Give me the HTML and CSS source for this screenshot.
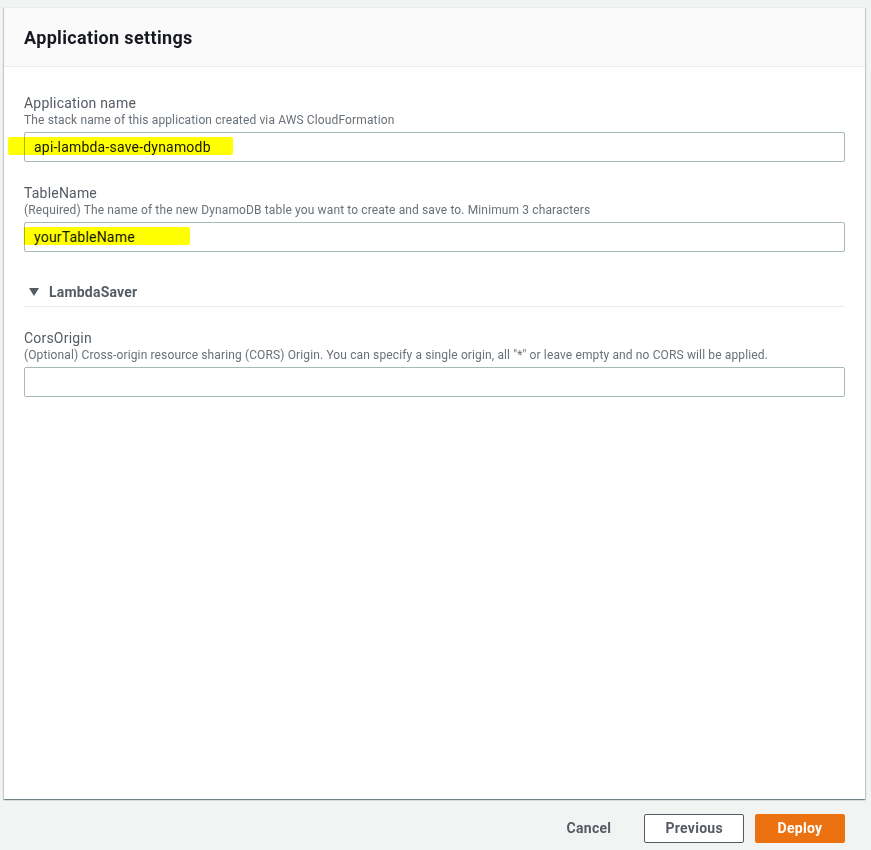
FILE: index.html
```html
<!DOCTYPE html>
<html lang="en">
<head>
<meta charset="utf-8">
<title>Application settings</title>
<link rel="stylesheet" href="styles.css">
</head>
<body>
<div class="page">
  <div class="card">
    <div class="card-header">
      <h2 class="card-title">Application settings</h2>
    </div>
    <div class="card-body">
      <div class="field">
        <div class="field-label">Application name</div>
        <div class="field-desc">The stack name of this application created via AWS CloudFormation</div>
        <div class="input-wrap">
          <div class="input">api-lambda-save-dynamodb</div>
          <span class="marker marker-one"></span>
        </div>
      </div>
      <div class="field">
        <div class="field-label">TableName</div>
        <div class="field-desc">(Required) The name of the new DynamoDB table you want to create and save to. Minimum 3 characters</div>
        <div class="input-wrap">
          <div class="input">yourTableName</div>
          <span class="marker marker-two"></span>
        </div>
      </div>
      <div class="section-head">
        <svg class="caret" width="10" height="8" viewBox="0 0 10 8"><polygon points="0,0 10,0 5,8" fill="#545b64"/></svg>
        <span class="section-title">LambdaSaver</span>
      </div>
      <div class="field">
        <div class="field-label">CorsOrigin</div>
        <div class="field-desc">(Optional) Cross-origin resource sharing (CORS) Origin. You can specify a single origin, all "*" or leave empty and no CORS will be applied.</div>
        <div class="input-wrap">
          <div class="input"></div>
        </div>
      </div>
    </div>
  </div>
  <div class="actions">
    <button class="btn btn-link">Cancel</button>
    <button class="btn btn-normal">Previous</button>
    <button class="btn btn-primary">Deploy</button>
  </div>
</div>
</body>
</html>
```

FILE: styles.css
```css
html, body {
  margin: 0;
  padding: 0;
  background: #f2f3f3;
  font-family: Roboto, "Liberation Sans", Arial, sans-serif;
  color: #16191f;
}

.page {
  padding: 7px 6px 0 4px;
  display: flex;
  flex-direction: column;
}

.card {
  background: #ffffff;
  height: 792px;
  box-shadow: 0 1px 1px 0 rgba(0, 28, 36, 0.35), 1px 1px 1px 0 rgba(0, 28, 36, 0.15), -1px 1px 1px 0 rgba(0, 28, 36, 0.15);
  border-top: 1px solid #eaeded;
  box-sizing: border-box;
  display: flex;
  flex-direction: column;
}

.card-header {
  background: #fafafa;
  border-bottom: 1px solid #eaeded;
  padding: 19px 20px 17px;
}

.card-title {
  margin: 0;
  font-size: 18px;
  line-height: 22px;
  font-weight: 700;
  letter-spacing: 0.35px;
  color: #16191f;
}

.card-body {
  padding: 27px 20px 0;
  display: flex;
  flex-direction: column;
}

.field {
  display: flex;
  flex-direction: column;
  margin-bottom: 22px;
}

.field-label {
  font-size: 14px;
  line-height: 18px;
  letter-spacing: 0.2px;
  color: #545b64;
}

.field-desc {
  font-size: 12px;
  line-height: 16px;
  letter-spacing: 0.13px;
  color: #687078;
}

.input-wrap {
  position: relative;
  margin-top: 4px;
}

.input {
  height: 30px;
  box-sizing: border-box;
  border: 1px solid #aab7b8;
  border-radius: 2px;
  background: #fff;
  padding: 0 9px;
  font-size: 14px;
  line-height: 28px;
  letter-spacing: 0.2px;
  color: #16191f;
}

.marker {
  position: absolute;
  top: 5px;
  height: 18px;
  background: #ffff00;
  mix-blend-mode: multiply;
  border-radius: 2px;
}

.marker-one {
  left: -16px;
  width: 225px;
}

.marker-two {
  left: 0;
  width: 166px;
}

.section-head {
  display: flex;
  align-items: center;
  gap: 10px;
  margin-top: 9px;
  margin-bottom: 22px;
  padding: 0 0 5px 5px;
  border-bottom: 1px solid #eaeded;
}

.caret {
  display: block;
}

.section-title {
  font-size: 14px;
  line-height: 18px;
  font-weight: 700;
  letter-spacing: 0.2px;
  color: #545b64;
}

.actions {
  display: flex;
  justify-content: flex-end;
  align-items: center;
  gap: 11px;
  padding: 15px 20px 0 0;
}

.btn {
  height: 29px;
  box-sizing: border-box;
  padding: 0 20px;
  font-family: inherit;
  font-size: 14px;
  font-weight: 700;
  line-height: 27px;
  letter-spacing: 0.3px;
  border-radius: 2px;
  cursor: pointer;
}

.btn-link {
  background: transparent;
  border: 1px solid transparent;
  color: #545b64;
  margin-right: 1px;
}

.btn-normal {
  background: #fff;
  border: 1px solid #545b64;
  color: #545b64;
  min-width: 99px;
}

.btn-primary {
  background: #ec7211;
  border: 1px solid #ec7211;
  color: #fff;
  min-width: 90px;
}
```
